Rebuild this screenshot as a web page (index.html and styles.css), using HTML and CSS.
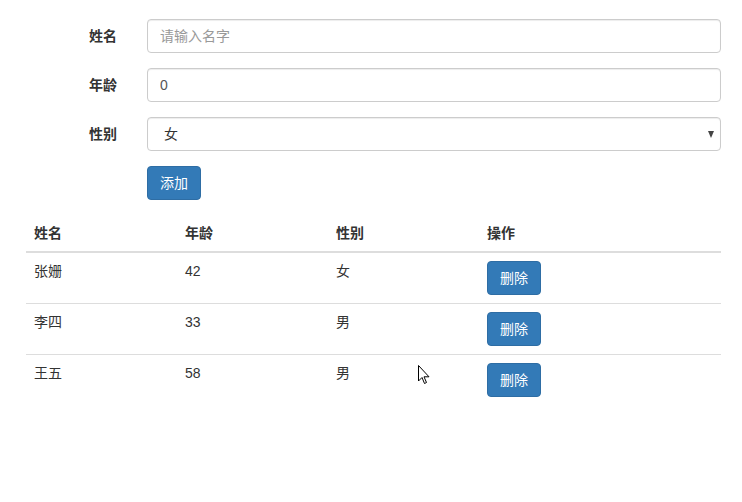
FILE: index.html
```html
<!DOCTYPE html>
<html lang="zh-CN">
<head>
    <meta charset="UTF-8">
    <title>用户列表</title>
    <link rel="stylesheet" href="styles.css">
</head>
<body>
    <div class="container">
        <form class="form-horizontal">
            <div class="form-group">
                <label class="control-label">姓名</label>
                <div class="field">
                    <input class="form-control" type="text" placeholder="请输入名字">
                </div>
            </div>
            <div class="form-group">
                <label class="control-label">年龄</label>
                <div class="field">
                    <input class="form-control" type="text" value="0">
                </div>
            </div>
            <div class="form-group">
                <label class="control-label">性别</label>
                <div class="field">
                    <div class="select-box">
                        <span class="select-value">女</span>
                        <span class="caret"></span>
                    </div>
                </div>
            </div>
            <div class="form-group">
                <span class="control-label"></span>
                <div class="field">
                    <button type="button" class="btn btn-primary">添加</button>
                </div>
            </div>
        </form>

        <table class="table">
            <thead>
                <tr>
                    <th class="col-name">姓名</th>
                    <th class="col-age">年龄</th>
                    <th class="col-sex">性别</th>
                    <th>操作</th>
                </tr>
            </thead>
            <tbody>
                <tr>
                    <td>张姗</td>
                    <td>42</td>
                    <td>女</td>
                    <td><button type="button" class="btn btn-primary">删除</button></td>
                </tr>
                <tr>
                    <td>李四</td>
                    <td>33</td>
                    <td>男</td>
                    <td><button type="button" class="btn btn-primary">删除</button></td>
                </tr>
                <tr>
                    <td>王五</td>
                    <td>58</td>
                    <td>男</td>
                    <td><button type="button" class="btn btn-primary">删除</button></td>
                </tr>
            </tbody>
        </table>
    </div>

    <svg class="cursor" width="12" height="20" viewBox="0 0 12 20">
        <path d="M0.5 0.5 L0.5 16 L4 12.5 L6.5 18.5 L8.5 17.5 L6 11.8 L11 11.8 Z" fill="#fff" stroke="#000" stroke-width="1"/>
    </svg>
</body>
</html>
```

FILE: styles.css
```css
body {
    margin: 0;
    background: #fff;
    font-family: "Liberation Sans", "Noto Sans CJK SC", sans-serif;
    font-size: 14px;
    line-height: 20px;
    color: #333;
}

.container {
    padding: 19px 21px 0 26px;
}

.form-group {
    display: flex;
    margin-bottom: 15px;
}

.control-label {
    width: 91px;
    flex: none;
    padding-right: 30px;
    padding-top: 7px;
    text-align: right;
    font-weight: bold;
}

.field {
    flex: 1;
}

.form-control,
.select-box {
    display: block;
    box-sizing: border-box;
    width: 100%;
    height: 34px;
    padding: 6px 12px;
    font: inherit;
    color: #555;
    background: #fff;
    border: 1px solid #ccc;
    border-radius: 4px;
    box-shadow: inset 0 1px 1px rgba(0, 0, 0, .075);
}

.form-control::placeholder {
    color: #999;
}

.select-box {
    display: flex;
    align-items: center;
    justify-content: space-between;
    color: #333;
}

.select-value {
    padding-left: 4px;
}

.caret {
    width: 0;
    height: 0;
    margin-right: -6px;
    border-left: 3.5px solid transparent;
    border-right: 3.5px solid transparent;
    border-top: 7px solid #444;
}

.btn {
    display: inline-block;
    height: 34px;
    padding: 6px 12px;
    font: inherit;
    line-height: 20px;
    border: 1px solid transparent;
    border-radius: 4px;
    cursor: pointer;
}

.btn-primary {
    color: #fff;
    background: #337ab7;
    border-color: #2e6da4;
}

.table {
    width: 100%;
    border-collapse: collapse;
    border-spacing: 0;
}

.table th,
.table td {
    padding: 8px;
    text-align: left;
    vertical-align: top;
    line-height: 20px;
}

.table th {
    font-weight: bold;
    border-bottom: 2px solid #ddd;
}

.table td {
    border-top: 1px solid #ddd;
}

.table thead + tbody tr:first-child td {
    border-top: 0;
}

.col-name,
.col-age,
.col-sex {
    width: 135px;
}

.cursor {
    position: absolute;
    left: 418px;
    top: 365px;
}
```
